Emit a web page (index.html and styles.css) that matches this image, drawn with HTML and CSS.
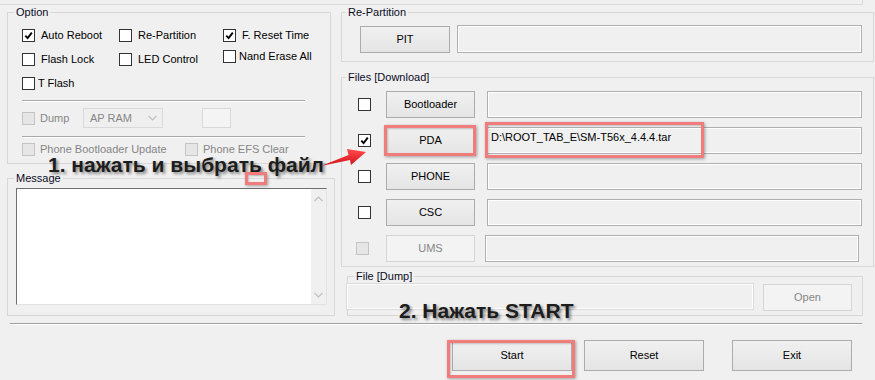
FILE: index.html
```html
<!DOCTYPE html>
<html lang="ru">
<head>
    <meta charset="UTF-8">
    <title>Odin3 - прошивка</title>
    <link rel="stylesheet" href="styles.css">
</head>

<body>
<div class="window">
    <!-- Верхняя рамка (обрезана) -->
    <div class="top-frame"></div>

    <div class="main">
        <!-- Левая колонка -->
        <div class="col">
            <fieldset class="group group-option">
                <legend>Option</legend>
                <div class="option-body">
                    <div class="opt-grid">
                        <span class="check"><span class="box"><svg width="9" height="9" viewBox="0 0 9 9"><path d="M1.3 4.6 L3.6 7.1 L7.8 1.6" /></svg></span>Auto Reboot</span>
                        <span class="check"><span class="box"></span>Re-Partition</span>
                        <span class="check"><span class="box"><svg width="9" height="9" viewBox="0 0 9 9"><path d="M1.3 4.6 L3.6 7.1 L7.8 1.6" /></svg></span>F. Reset Time</span>
                        <span class="check"><span class="box"></span>Flash Lock</span>
                        <span class="check"><span class="box"></span>LED Control</span>
                        <span class="check check-up"><span class="box"></span>Nand Erase All</span>
                        <span class="check check-tight"><span class="box"></span>T Flash</span>
                    </div>
                    <hr class="sep">
                    <div class="dump-row">
                        <span class="check is-off dump-check"><span class="box"></span>Dump</span>
                        <span class="combo">AP RAM <svg width="9" height="6" viewBox="0 0 9 6"><path d="M0.5 0.8 L4.5 4.8 L8.5 0.8" /></svg></span>
                        <span class="slot"></span>
                    </div>
                    <hr class="sep sep-2">
                    <div class="phone-row">
                        <span class="check is-off bl-check"><span class="box"></span>Phone Bootloader Update</span>
                        <span class="check is-off"><span class="box"></span>Phone EFS Clear</span>
                    </div>
                </div>
            </fieldset>

            <fieldset class="group group-message">
                <legend>Message</legend>
                <div class="message-body">
                    <div class="log">
                        <div class="scroll">
                            <svg width="9" height="6" viewBox="0 0 9 6"><path d="M0.5 5.2 L4.5 1.2 L8.5 5.2" /></svg>
                            <svg width="9" height="6" viewBox="0 0 9 6"><path d="M0.5 0.8 L4.5 4.8 L8.5 0.8" /></svg>
                        </div>
                    </div>
                </div>
            </fieldset>
        </div>

        <!-- Правая колонка -->
        <div class="col">
            <fieldset class="group group-pit">
                <legend>Re-Partition</legend>
                <div class="pit-body">
                    <button class="btn btn-pit">PIT</button>
                    <span class="field field-pit"></span>
                </div>
            </fieldset>

            <fieldset class="group group-files">
                <legend>Files [Download]</legend>
                <div class="files-body">
                    <div class="file-row">
                        <span class="box"></span>
                        <button class="btn btn-file">Bootloader</button>
                        <span class="field"></span>
                    </div>
                    <div class="file-row">
                        <span class="box"><svg width="9" height="9" viewBox="0 0 9 9"><path d="M1.3 4.6 L3.6 7.1 L7.8 1.6" /></svg></span>
                        <button class="btn btn-file">PDA</button>
                        <span class="field">D:\ROOT_TAB_E\SM-T56x_4.4.4.tar</span>
                    </div>
                    <div class="file-row">
                        <span class="box"></span>
                        <button class="btn btn-file">PHONE</button>
                        <span class="field"></span>
                    </div>
                    <div class="file-row">
                        <span class="box"></span>
                        <button class="btn btn-file">CSC</button>
                        <span class="field"></span>
                    </div>
                    <div class="file-row row-ums">
                        <span class="box is-off"></span>
                        <button class="btn btn-file is-off">UMS</button>
                        <span class="field"></span>
                    </div>
                </div>
            </fieldset>

            <fieldset class="group group-dump">
                <legend>File [Dump]</legend>
                <div class="dump-body">
                    <span class="field field-dump"></span>
                    <button class="btn btn-open is-off">Open</button>
                </div>
            </fieldset>
        </div>
    </div>

    <hr class="rule">

    <div class="actions">
        <button class="btn btn-main btn-start">Start</button>
        <button class="btn btn-main btn-reset">Reset</button>
        <button class="btn btn-main">Exit</button>
    </div>

    <!-- Подсказки поверх окна -->
    <div class="note note-1">1. нажать и выбрать файл</div>
    <div class="note note-2">2. Нажать START</div>
    <svg class="arrow" width="50" height="28" viewBox="0 0 50 28">
        <defs>
            <linearGradient id="arrow-fill" x1="0" y1="0" x2="0" y2="1">
                <stop offset="0" stop-color="#ff4b4b"/>
                <stop offset="1" stop-color="#d4121a"/>
            </linearGradient>
        </defs>
        <polygon points="48,8 29,5 30.5,11 3,22 32,16 33,21" fill="url(#arrow-fill)"/>
    </svg>
    <div class="mark mark-dot"></div>
    <div class="mark mark-pda"></div>
    <div class="mark mark-path"></div>
    <div class="mark mark-start"></div>
</div>
</body>
</html>
```

FILE: styles.css
```css
/* General */
body {
    margin: 0;
    background: #f0f0f0;
    font: 11px/13px "Liberation Sans", Arial, sans-serif;
    color: #000;
}

.window {
    position: relative;
    width: 875px;
    height: 380px;
    overflow: hidden;
}

.top-frame {
    width: 862px;
    height: 4px;
    border-right: 1px solid #dcdcdc;
    border-bottom: 1px solid #dcdcdc;
}

.main {
    display: grid;
    grid-template-columns: 328px 533px;
    column-gap: 6px;
    padding: 1px 0 0 7px;
}

.col {
    display: flex;
    flex-direction: column;
    align-items: flex-start;
}

/* Group boxes */
.group {
    box-sizing: border-box;
    margin: 0;
    padding: 0;
    min-width: 0;
    border: 1px solid #d8d8d8;
}

.group legend {
    margin-left: 6px;
    padding: 0 2px;
    line-height: 13px;
    color: #0b0b1e;
}

.group-pit legend,
.group-files legend {
    margin-left: 4px;
}

/* Checkboxes */
.check {
    display: flex;
    align-items: center;
    gap: 6px;
    height: 13px;
    white-space: nowrap;
}

.box {
    box-sizing: border-box;
    flex: none;
    width: 13px;
    height: 13px;
    border: 1px solid #333;
    background: #fff;
    display: flex;
    align-items: center;
    justify-content: center;
}

.box svg path {
    fill: none;
    stroke: #000;
    stroke-width: 1.9;
}

.check.is-off {
    color: #868686;
    gap: 5px;
}

.check.is-off .box,
.box.is-off {
    border-color: #c4c4c4;
    background: #e6e6e6;
}

.check-up {
    margin-top: -3px;
    gap: 3px;
}

.check-tight {
    gap: 3px;
}

/* Option */
.group-option {
    width: 324px;
    height: 158px;
}

.option-body {
    padding: 10px 0 0 14px;
}

.opt-grid {
    display: grid;
    grid-template-columns: 97px 104px auto;
    row-gap: 11px;
}

.sep {
    width: 283px;
    height: 0;
    margin: 10px 0 0;
    border: 0;
    border-top: 1px solid #a9a9a9;
    border-bottom: 1px solid #fff;
}

.sep-2 {
    margin-top: 8px;
}

.dump-row {
    display: flex;
    align-items: center;
    height: 20px;
    margin-top: 6px;
}

.dump-check {
    width: 61px;
    gap: 6px;
}

.combo {
    box-sizing: border-box;
    width: 80px;
    height: 20px;
    padding: 0 5px 0 6px;
    border: 1px solid #d9d9d9;
    background: #efefef;
    color: #868686;
    display: flex;
    align-items: center;
    justify-content: space-between;
}

.combo svg path,
.scroll svg path {
    fill: none;
    stroke: #bdbdbd;
    stroke-width: 1.2;
}

.slot {
    box-sizing: border-box;
    width: 29px;
    height: 20px;
    margin-left: 39px;
    border: 1px solid #d9d9d9;
    background: #f4f4f4;
}

.phone-row {
    display: flex;
    margin-top: 5px;
}

.bl-check {
    width: 163px;
}

/* Message */
.group-message {
    width: 328px;
    height: 144px;
    margin-top: 8px;
}

.message-body {
    padding: 3px 7px 0 8px;
}

.log {
    box-sizing: border-box;
    width: 311px;
    height: 117px;
    background: #fff;
    border-top: 1px solid #6e6e6e;
    border-left: 1px solid #6e6e6e;
    border-right: 1px solid #e3e3e3;
    border-bottom: 1px solid #e3e3e3;
    display: flex;
    justify-content: flex-end;
}

.scroll {
    width: 15px;
    padding: 7px 0 6px;
    background: #f0f0f0;
    display: flex;
    flex-direction: column;
    justify-content: space-between;
    align-items: center;
}

/* Buttons and fields */
.btn {
    box-sizing: border-box;
    margin: 0;
    padding: 0;
    height: 27px;
    border: 1px solid #acacac;
    background: linear-gradient(#f0f0f0, #e5e5e5);
    font: inherit;
    color: #000;
    flex: none;
}

.btn.is-off {
    border-color: #d5d5d5;
    background: #f3f3f3;
    color: #868686;
}

.field {
    box-sizing: border-box;
    flex: 1;
    height: 27px;
    padding: 3px 3px 0;
    border: 1px solid #b0b0b0;
    box-shadow: inset 0 0 0 1px #fff;
    background: #f0f0f0;
    white-space: nowrap;
}

/* Re-Partition */
.group-pit {
    width: 533px;
    height: 56px;
}

.pit-body {
    display: flex;
    align-items: flex-start;
    gap: 7px;
    padding: 6px 11px 0 18px;
}

.btn-pit {
    width: 90px;
    margin-top: 1px;
}

.field-pit {
    height: 28px;
}

/* Files */
.group-files {
    width: 533px;
    height: 196px;
    margin-top: 9px;
}

.files-body {
    display: grid;
    row-gap: 9px;
    padding: 7px 11px 0 16px;
}

.file-row {
    display: flex;
    align-items: center;
    height: 27px;
}

.btn-file {
    width: 89px;
    margin: 0 12px 0 15px;
}

.row-ums .box {
    margin-left: -2px;
}

.row-ums .btn-file {
    margin: 0 10px 0 17px;
}

.row-ums .field {
    margin-right: 3px;
}

/* Dump */
.group-dump {
    width: 516px;
    height: 46px;
    margin: 3px 0 0 6px;
}

.dump-body {
    display: flex;
    align-items: flex-start;
    padding-right: 10px;
}

.field-dump {
    margin-left: -2px;
    border-color: #dadada;
}

.btn-open {
    width: 89px;
    margin: 1px 0 0 9px;
}

/* Footer */
.rule {
    width: 852px;
    height: 0;
    margin: 7px 0 0 10px;
    border: 0;
    border-top: 1px solid #a0a0a0;
    border-bottom: 1px solid #fff;
}

.actions {
    display: flex;
    padding: 15px 0 0 452px;
}

.btn-main {
    width: 120px;
    height: 31px;
}

.btn-start {
    margin-right: 12px;
}

.btn-reset {
    margin-right: 28px;
}

/* Notes over the window */
.note {
    position: absolute;
    font: bold 21px/21px "Liberation Sans", Arial, sans-serif;
    color: #1d1d1d;
    text-shadow: 2px 2px 3px rgba(0, 0, 0, 0.45);
    white-space: nowrap;
}

.note-1 {
    left: 48px;
    top: 154px;
}

.note-2 {
    left: 399px;
    top: 300px;
}

.arrow {
    position: absolute;
    left: 318px;
    top: 144px;
}

.mark {
    position: absolute;
    box-sizing: border-box;
    border: 3px solid #f07c7c;
    box-shadow: 1px 1px 3px rgba(0, 0, 0, 0.35), inset 1px 1px 2px rgba(0, 0, 0, 0.2);
}

.mark-dot {
    left: 245px;
    top: 172px;
    width: 22px;
    height: 13px;
}

.mark-pda {
    left: 384px;
    top: 125px;
    width: 92px;
    height: 31px;
}

.mark-path {
    left: 485px;
    top: 122px;
    width: 219px;
    height: 36px;
}

.mark-start {
    left: 447px;
    top: 340px;
    width: 128px;
    height: 38px;
}
```
